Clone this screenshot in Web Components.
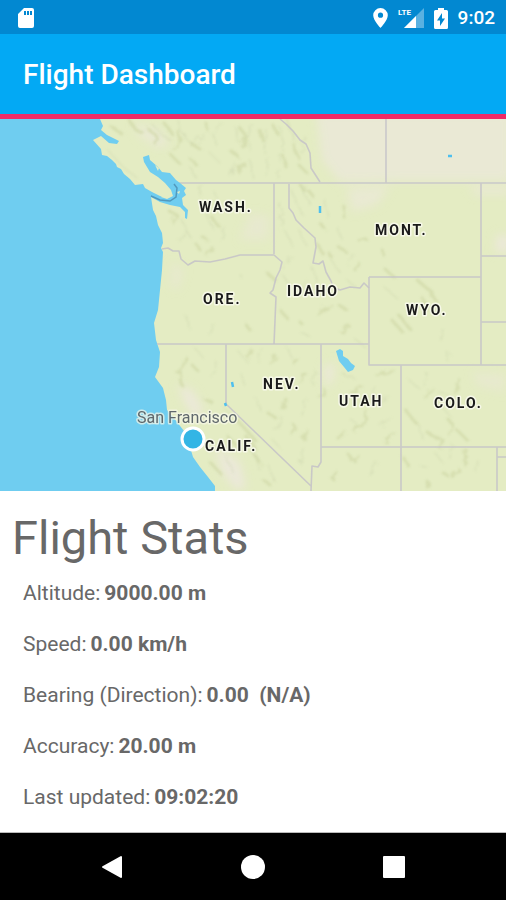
<!DOCTYPE html>
<html lang="en">
<head>
<meta charset="utf-8">
<meta name="viewport" content="width=device-width, initial-scale=1">
<title>Flight Dashboard</title>
<style>
	body {
		margin: 0;
		background: #fff;
		font-family: Roboto, "Noto Sans", sans-serif;
	}
</style>
</head>
<body>
<flight-app></flight-app>

<script>
// Base for every element: template + styles go in the open shadow root
class BaseElement extends HTMLElement {
	constructor() {
		super();
		this.attachShadow({ mode: "open" });
	}
	render() {
		const template = document.createElement("template");
		template.innerHTML = `${this.getStyles()}${this.getTemplate()}`;
		this.shadowRoot.replaceChildren(template.content.cloneNode(true));
	}
	connectedCallback() {
		this.render();
	}
}

class StatusBar extends BaseElement {
	getStyles() {
		return `
			<style>
				:host {
					display: flex;
					align-items: center;
					gap: 10px;
					height: 34px;
					padding: 2px 11px 0 18px;
					box-sizing: border-box;
					background: #0288d1;
					color: #fff;
					font-size: 19px;
					line-height: 22px;
					font-weight: 500;
				}
				svg { display: block; flex: none; }
				.sd { margin-right: auto; }
				.signal { overflow: visible; }
				.lte { font-size: 8px; font-weight: 700; }
			</style>
		`;
	}
	getTemplate() {
		return `
			<svg class="sd" width="16" height="20" fill="#fff">
				<path d="M6 0H14Q16 0 16 2V18Q16 20 14 20H2Q0 20 0 18V6ZM6 3V7H8V3ZM9 3V7H11V3ZM12 3V7H14V3Z" fill-rule="evenodd"/>
			</svg>
			<svg width="15" height="20" fill="#fff">
				<path d="M7.500 0A7.300 7.300 0 0 0 .2 7.300C.2 12.500 7.500 20 7.500 20S14.800 12.500 14.800 7.300A7.300 7.300 0 0 0 7.500 0ZM7.500 4.600A2.600 2.600 0 1 1 7.500 9.800A2.600 2.600 0 1 1 7.500 4.600Z"/>
			</svg>
			<svg class="signal" width="26" height="20" fill="#fff">
				<path d="M26 0V20H6Z" opacity=".35"/>
				<path d="M0 0H15V9H0Z" fill="#0288d1"/>
				<path d="M18 8V20H6Z"/>
				<text class="lte" x="0" y="7">LTE</text>
			</svg>
			<svg width="14" height="21" fill="#fff">
				<path d="M4 0H10V2H12.500Q14 2 14 3.500V19.500Q14 21 12.500 21H1.500Q0 21 0 19.500V3.500Q0 2 1.500 2H4ZM8 5L3 12.500H6V18L11 10.500H8Z" fill-rule="evenodd"/>
			</svg>
			<span>9:02</span>
		`;
	}
}
customElements.define("status-bar", StatusBar);

class AppBar extends BaseElement {
	getStyles() {
		return `
			<style>
				:host {
					display: flex;
					align-items: center;
					box-sizing: border-box;
					height: 85px;
					padding: 2px 23px 0;
					background: #03a9f4;
					border-bottom: 5px solid #ef2b67;
					color: #fff;
				}
				h1 {
					margin: 0;
					font-size: 28px;
					line-height: 32px;
					font-weight: 500;
				}
			</style>
		`;
	}
	getTemplate() {
		return `<h1><slot></slot></h1>`;
	}
}
customElements.define("app-bar", AppBar);

class FlightMap extends BaseElement {
	getStyles() {
		return `
			<style>
				:host { display: block; }
				svg { display: block; width: 100%; height: auto; }
				.border { fill: none; stroke: #c4c2c8; stroke-width: 1.6; stroke-linejoin: round; opacity: .85; }
				.water { fill: #6fcdf0; }
				.dry { fill: #ebe8d9; filter: url(#soft); }
				.hill { fill: none; stroke: #ced6a4; stroke-width: 3; stroke-linecap: round; stroke-linejoin: round; opacity: .6; filter: url(#rough); }
				.ridge { fill: none; stroke: #cad2ac; stroke-width: 1; stroke-linecap: round; opacity: .6; filter: url(#rough); }
				text { paint-order: stroke; stroke: #f6f8e8; stroke-width: 3; stroke-linejoin: round; }
				.state { font-size: 14px; font-weight: 700; letter-spacing: 2px; fill: #1a1a1a; }
				.city { font-size: 16px; fill: #60686c; stroke-opacity: .7; }
			</style>
		`;
	}
	getTemplate() {
		// name, x, baseline
		const states = [
			["WASH.", 199, 212],
			["MONT.", 375, 235],
			["ORE.", 203, 304],
			["IDAHO", 287, 296],
			["WYO.", 406, 315],
			["NEV.", 263, 389],
			["UTAH", 339, 406],
			["COLO.", 434, 408],
			["CALIF.", 205, 451],
		];
		const coast = "M100 119L103 126L101 130L107 135L119 141L117 144L109 143L101 136L93 140L101 149L102 155L107 156L112 160L116 164L117 167L121 169L124 174L130 179L135 185L143 184L145 188L152 192L162 197L151 197L153 210L156 216L158 225L162 233L163 243L161 248L163 252L162 270L160 290L158 310L154 323L156 340L160 352L159 367L155 377L163 388L166 400L167 410L177 422L184 431L190 447L193 457L200 467L208 477L215 486V491H506V119Z";
		return `
			<svg viewBox="0 119 506 372" role="img" aria-label="Map of the western United States">
				<defs>
					<filter id="soft" x="-20%" y="-20%" width="140%" height="140%">
						<feGaussianBlur stdDeviation="5"/>
					</filter>
					<filter id="rough" x="-5%" y="-5%" width="110%" height="110%">
						<feTurbulence type="fractalNoise" baseFrequency=".12" numOctaves="2" seed="4"/>
						<feDisplacementMap in="SourceGraphic" scale="9"/>
						<feGaussianBlur stdDeviation=".9"/>
					</filter>
					<clipPath id="land"><path d="${coast}"/></clipPath>
				</defs>
				<rect class="water" y="119" width="506" height="372"/>
				<path d="${coast}" fill="#e4ecc3"/>
				<g clip-path="url(#land)">
					<g class="dry">
						<path d="M316 112H510V181H400L340 182L322 160Z" opacity=".8"/>
						<path d="M347 188L390 186L377 205L352 212Z" opacity=".7"/>
						<path d="M470 188H510V194H475ZM497 235H510V252H495Z"/>
						<path d="M133 123L160 130L170 145L158 148L140 136Z" opacity=".7"/>
						<path d="M178 385L192 390L203 409L196 420L185 403Z"/>
						<path d="M215 447L240 462L246 488L236 490L222 472Z"/>
						<path d="M324 367L334 362L333 380L326 388Z"/>
						<path d="M472 372L505 374V392L478 386Z" opacity=".5"/>
						<path d="M250 213L270 216L268 240L240 240Z" opacity=".5"/>
						<path d="M172 262L184 270L178 290L170 286Z" opacity=".5"/>
					</g>
					<path class="hill" d="M112 127l9 6M130 121l6 9l7 3M148 129l9 7l-2 7M165 124l7 10M179 133l2 9l-7 7M190 143l10 6M205 122l3 8M172 156l7 7M192 160l5 6M240 128l6 8l-5 9M259 129l3 11M272 124l5 9M230 150l8 6M244 163l-6 8M294 145l5 13M298 164l9 9M283 155l3 12M170 212l8 4l-5 6M212 217l6 9M201 236l6 4M213 249l-7 5M196 244l4 6M308 190l6 7M301 185l5 8M320 223l4 5M318 245l4 8M344 206l1 12M338 247l6 3M327 251l4 6M359 240l7-1M382 250l2 6M360 264l-5 6M386 270l10 9M418 281l14 11l3 8M399 315l10 13M393 321l10 12M423 299l2 9M268 274l6 5M246 325l4 5M280 310l7 8M298 320l5 5M318 314l13-9M340 306l7 4M349 326l-7 6M187 359l-5 9l-4 9l5 9M198 371l-5-5M205 399l9 5M251 350l-3 7M276 357l-5 6M298 360l-4 4M306 375l-5 7M286 399l-4 9M268 413l8 5M294 425l-2 9M307 431l-3 8M237 420l10 11l9 10M247 437l9 12M254 455l7 9M209 461l11 12M227 436l12 12M263 479l8 7M325 390l-4 8M352 393l10-6M366 411l-3 14l-8 6M377 375l16-5M394 434l-9 8M337 437l9-4M405 409l11 14M424 396l9-6M427 432l16 8l-3 8M447 418l6 7l-4 9M457 430l10 10M459 380l-3 13M453 402l7 5M349 455l4 7l5-6M333 479l4-6M404 458l5 9M442 472l5 3M458 469l-6 8M466 450l-1 15M429 483l-2 4"/>
					<path class="ridge" d="M108 150l15 17l14 11M151 123l11 12l10 6M178 120l6 17l9 7M203 131l-7 13M222 124l-9 10l4 12M235 127l3 15M252 124l-5 16l4 11M266 130l-2 22M279 127l5 18l-5 15M235 163l-4 14M250 160l4 19M269 159l-3 16M288 120l7 21M305 137l-4 15M280 171l-2 9M190 167l6 11M210 153l8 8M202 185l-3 11M215 193l4 7M183 221l7 16M204 209l9 19M178 239l9-6M225 228l-4 14M291 190l11 24M302 186l9 20M280 203l3 23M285 231l9 17M299 230l8 16M325 200l3 18M336 226l6 13M332 260l7 12M313 268l4 15M353 254l-5 11M292 257l-8 12M348 281l7 5M283 275l5 9M305 279l-3 9M385 288l11 9M444 330l-3 10M449 353l-2 7M185 315l3 12M214 325l-4 10M240 274l4 6M196 349l8 10M216 362l-4 15M240 353l7 9M263 349l-4 13M287 348l5 10M316 372l-4 12M241 374l4 12M256 398l5 13M282 418l-6 13M307 400l-5 15M272 439l9 10M304 450l-4 13M224 408l9 8M246 445l12 13l2 12M270 466l4 15M226 456l8 18M342 374l12 4M376 386l-8 11M388 396l-8 8M350 419l7 5M391 418l-11 7M410 381l9 7M427 373l-3 15M438 391l11 5M442 407l9 10M418 424l5 15M453 446l-3 12M375 461l-6 13M419 465l9 3M437 455l7 9M479 462l-2 10M355 339l9 7M301 333l10 4"/>
				</g>
				<path class="border" d="M178 183H506M386 119V183M481 183V365M369 277H481M369 277V365H506M481 256H506M481 322H506M157 344H369M401 365V491M321 447H506M497 447V491M497 457H506M274 183V254M226 344V404L311 486M311 491L312 466L318 467L321 462V344"/>
				<path class="border" d="M162 249L168 248L173 251L179 251L181 259L188 265L195 261L210 262L225 259L240 255H274L282 262L280 270L276 278L273 290L270 293L276 297L274 344"/>
				<path class="border" d="M289 184V208L293 213L296 220L304 228L315 238L316 247L313 263L319 264L323 261L326 272L331 281L333 287L340 290L350 287L360 288L364 283L369 288"/>
				<path class="border" d="M280 119L286 124L293 131L300 140L306 144L310 153L311 168L320 182"/>
				<path class="water" d="M143 157L149 155L150 160L158 167L162 172L170 173L176 180L180 183L186 188L184 191L186 195L182 198L183 205L188 210L187 219L185 218L185 212L180 207L170 205L160 202L151 197L155 195L167 199L173 196L171 190L165 183L158 177L150 172L144 162Z"/>
				<path d="M151 196L160 200L170 201L176 197L177 188L174 184" fill="none" stroke="#5299bd" stroke-width="1.500"/>
				<path d="M155 165L159 168L158 171ZM177 192L180 191L179 194Z" fill="#e4ecc3"/>
				<path class="water" d="M336 351L340 349L343 351L343 356L348 359L351 363L355 366L353 370L348 372L344 367L339 361Z"/>
				<path d="M320 206V213M448 156H452M232 382L233 387M225 403L226 406" fill="none" stroke="#4ebfee" stroke-width="2.500"/>
				<text class="city" x="137" y="423">San Francisco</text>
				<circle cx="193" cy="439" r="11" fill="#33b5e5" stroke="#fff" stroke-width="3"/>
				${states.map(([name, x, y]) => `<text class="state" x="${x}" y="${y}">${name}</text>`).join("")}
			</svg>
		`;
	}
}
customElements.define("flight-map", FlightMap);

class StatRow extends BaseElement {
	static get observedAttributes() {
		return ["label"];
	}
	attributeChangedCallback(attr, oldValue, newVal) {
		this[attr] = newVal;
	}
	getStyles() {
		return `
			<style>
				:host {
					display: flex;
					align-items: center;
					gap: 4px;
					height: 51px;
					padding: 0 23px;
					font-size: 21px;
				}
				b { white-space: pre; }
			</style>
		`;
	}
	getTemplate() {
		return `<span>${this.label}:</span><b><slot></slot></b>`;
	}
}
customElements.define("stat-row", StatRow);

class FlightStats extends BaseElement {
	getStyles() {
		return `
			<style>
				:host {
					display: block;
					padding: 18px 0 9px;
					color: #686868;
				}
				h2 {
					margin: 0;
					padding: 0 12px;
					font-size: 47px;
					line-height: 58px;
					font-weight: 400;
				}
			</style>
		`;
	}
	getTemplate() {
		return `<h2>Flight Stats</h2><slot></slot>`;
	}
}
customElements.define("flight-stats", FlightStats);

class NavBar extends BaseElement {
	getStyles() {
		return `
			<style>
				:host {
					display: flex;
					box-sizing: border-box;
					height: 68px;
					padding: 0 42px;
					background: #000;
					border-top: 1px solid #bbb;
				}
				button {
					flex: 1;
					display: flex;
					align-items: center;
					justify-content: center;
					padding: 0;
					border: 0;
					background: none;
				}
			</style>
		`;
	}
	getTemplate() {
		return `
			<button aria-label="Back">
				<svg width="22" height="24"><path d="M20 2V22L2 12Z" fill="#fff" stroke="#fff" stroke-width="2" stroke-linejoin="round"/></svg>
			</button>
			<button aria-label="Home">
				<svg width="24" height="24"><circle cx="12" cy="12" r="12" fill="#fff"/></svg>
			</button>
			<button aria-label="Recent apps">
				<svg width="22" height="22"><rect width="22" height="22" rx="1" fill="#fff"/></svg>
			</button>
		`;
	}
}
customElements.define("nav-bar", NavBar);

class FlightApp extends BaseElement {
	getStyles() {
		return `
			<style>
				:host {
					display: flex;
					flex-direction: column;
					min-height: 100vh;
				}
				flight-stats { flex: 1; }
			</style>
		`;
	}
	getTemplate() {
		return `
			<status-bar></status-bar>
			<app-bar>Flight Dashboard</app-bar>
			<flight-map></flight-map>
			<flight-stats>
				<stat-row label="Altitude">9000.00 m</stat-row>
				<stat-row label="Speed">0.00 km/h</stat-row>
				<stat-row label="Bearing (Direction)">0.00  (N/A)</stat-row>
				<stat-row label="Accuracy">20.00 m</stat-row>
				<stat-row label="Last updated">09:02:20</stat-row>
			</flight-stats>
			<nav-bar></nav-bar>
		`;
	}
}
customElements.define("flight-app", FlightApp);
</script>
</body>
</html>
